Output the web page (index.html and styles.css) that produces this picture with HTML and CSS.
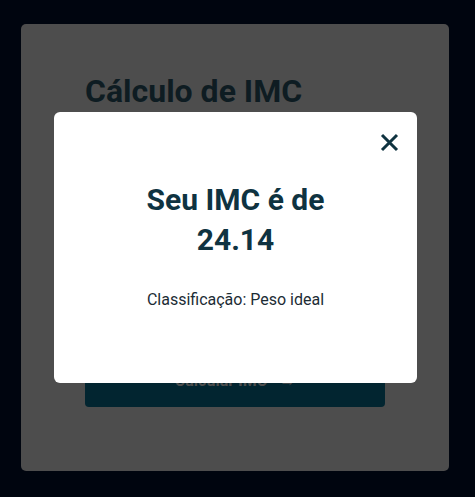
FILE: index.html
```html
<!DOCTYPE html>
<html lang="pt-BR">
<head>
<meta charset="utf-8">
<title>Cálculo de IMC</title>
<link rel="stylesheet" href="styles.css">
</head>
<body>
  <main class="card">
    <h1 class="title">Cálculo de IMC</h1>
    <form class="form">
      <label class="field">
        <span class="label">Altura</span>
        <input class="input" type="text" placeholder="Altura em metros">
      </label>
      <label class="field">
        <span class="label">Peso</span>
        <input class="input" type="text" placeholder="Peso em kg">
      </label>
      <button class="btn" type="button">Calcular IMC <span class="arrow">→</span></button>
    </form>
  </main>
  <div class="modal">
    <button class="close" type="button" aria-label="Fechar">
      <svg width="19" height="19" viewBox="0 0 19 19"><path d="M2 2 L17 17 M17 2 L2 17" stroke="#0f3340" stroke-width="3" stroke-linecap="butt" fill="none"/></svg>
    </button>
    <h2 class="result">Seu IMC é de<br>24.14</h2>
    <p class="class">Classificação: Peso ideal</p>
  </div>
</body>
</html>
```
FILE: styles.css
```css
* { box-sizing: border-box; }
html, body { margin: 0; height: 100%; }
body {
  background: #00050f;
  font-family: Roboto, "Liberation Sans", sans-serif;
  padding: 24px 0 0 21px;
}
.card {
  width: 428px;
  height: 447px;
  background: #4d4d4d;
  border-radius: 5px;
  padding: 48px 64px 0 64px;
}
.title {
  margin: 0;
  font-size: 32px;
  font-weight: 700;
  line-height: 38px;
  color: #0e1c22;
}
.form {
  display: flex;
  flex-direction: column;
  gap: 20px;
  margin-top: 38px;
}
.field { display: flex; flex-direction: column; gap: 6px; visibility: hidden; }
.label { font-size: 14px; line-height: 16px; }
.input { height: 48px; }
.form .field:nth-child(2) { margin-bottom: 28px; }
.btn {
  height: 51px;
  width: 300px;
  border: none;
  border-radius: 4px;
  background: #022530;
  color: #4d4d4d;
  font-family: Roboto, "Liberation Sans", sans-serif;
  font-size: 16px;
  font-weight: 700;
  padding: 0 0 2px;
}
.arrow { font-weight: 300; margin-left: 8px; }
.modal {
  position: fixed;
  left: 54px;
  top: 112px;
  width: 363px;
  height: 271px;
  background: #ffffff;
  border-radius: 6px;
  text-align: center;
  padding-top: 68px;
}
.close {
  position: absolute;
  top: 21px;
  right: 18px;
  background: none;
  border: none;
  padding: 0;
  width: 19px;
  height: 19px;
  display: block;
}
.close svg { display: block; }
.result {
  margin: 0;
  font-size: 30px;
  font-weight: 700;
  line-height: 40px;
  color: #0f3341;
}
.class {
  margin: 30px 0 0;
  font-size: 16px;
  line-height: 19px;
  color: #1c2c35;
}
```
